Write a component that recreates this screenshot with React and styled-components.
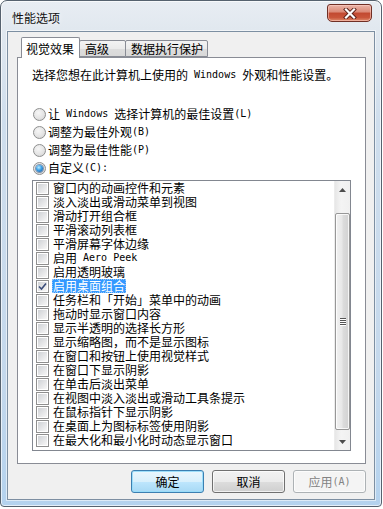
import React from "react";
import styled, { createGlobalStyle } from "styled-components";

const GlobalStyle = createGlobalStyle`
  html, body { margin: 0; padding: 0; background: #ffffff; }
  body {
    font-family: "Noto Sans CJK SC", "Noto Sans", sans-serif;
    font-size: 12px;
    color: #000;
  }
  * { box-sizing: border-box; }
`;

const Window = styled.div`
  width: 382px;
  height: 507px;
  border: 1px solid #56626f;
  border-radius: 7px 7px 4px 4px;
  background: linear-gradient(
    180deg,
    #e8edf3 0px,
    #e1e8ef 28px,
    #cfdeed 120px,
    #c4d8ec 380px,
    #b4d2ee 100%
  );
  box-shadow: inset 0 0 0 1px rgba(255, 255, 255, 0.65);
  padding: 0 6px 6px 6px;
  display: flex;
  flex-direction: column;
  overflow: hidden;
`;

const TitleBar = styled.div`
  height: 30px;
  display: flex;
  align-items: flex-start;
  padding-left: 5px;
`;

const Title = styled.div`
  margin-top: 9px;
  height: 16px;
  line-height: 16px;
  font-size: 12px;
  color: #111;
  text-shadow: 0 0 6px rgba(255, 255, 255, 0.9);
`;

const CloseButton = styled.div`
  margin-left: auto;
  margin-right: 3px;
  margin-top: 3px;
  width: 45px;
  height: 18px;
  border: 1px solid #6f2f25;
  border-radius: 3px 3px 5px 5px;
  background: linear-gradient(
    180deg,
    #eab4a8 0%,
    #dc8b78 42%,
    #c24a31 52%,
    #c9553a 78%,
    #de8c6c 100%
  );
  box-shadow: inset 0 0 0 1px rgba(255, 210, 200, 0.55);
  display: flex;
  align-items: center;
  justify-content: center;
`;

const Client = styled.div`
  flex: 1;
  border: 1px solid #7d8fa2;
  box-shadow: 0 0 0 1px rgba(255, 255, 255, 0.55);
  background: #f0f0f0;
  display: flex;
  flex-direction: column;
  padding: 5px 8px 6px 9px;
`;

const TabStrip = styled.div`
  height: 20px;
  display: flex;
  align-items: flex-end;
  padding-left: 4px;
  position: relative;
  z-index: 1;
`;

const Tab = styled.div`
  width: ${(p) => p.$w}px;
  height: ${(p) => (p.$active ? 21 : 17)}px;
  margin-bottom: ${(p) => (p.$active ? -1 : 0)}px;
  margin-left: ${(p) => (p.$first ? 0 : -1)}px;
  border: 1px solid #898c95;
  border-bottom: ${(p) => (p.$active ? "none" : "1px solid #898c95")};
  border-radius: 2px 2px 0 0;
  background: ${(p) =>
    p.$active
      ? "#ffffff"
      : "linear-gradient(180deg, #f3f3f3 0%, #ebebeb 50%, #dddddd 51%, #d9d9d9 100%)"};
  display: flex;
  align-items: flex-start;
  padding-top: ${(p) => (p.$active ? 4 : 1)}px;
  padding-left: ${(p) => p.$pl}px;
  font-size: 12px;
  z-index: ${(p) => (p.$active ? 2 : 1)};
`;

const Panel = styled.div`
  flex: 1;
  border: 1px solid #898c95;
  background: #ffffff;
  padding: 10px 14px 0 14px;
  display: flex;
  flex-direction: column;
`;

const Line = styled.div`
  height: 14px;
  white-space: nowrap;
  display: flex;
  align-items: flex-start;
`;

const Seg = styled.span`
  display: inline-block;
  height: 14px;
  line-height: 14px;
  vertical-align: top;
  white-space: pre;
`;

const Latin = styled(Seg)`
  font-family: "DejaVu Sans Mono", "Liberation Mono", monospace;
  font-size: 10px;
`;

const RadioGroup = styled.div`
  margin-top: 23px;
  display: flex;
  flex-direction: column;
`;

const RadioRow = styled.div`
  height: 18px;
  display: flex;
  align-items: center;
  padding-left: 1px;
  gap: 2px;
  white-space: nowrap;
`;

const RadioCircle = styled.span`
  width: 13px;
  height: 13px;
  border-radius: 50%;
  border: 1px solid #8e8f8f;
  background: radial-gradient(circle at 40% 35%, #f6f6f6 0%, #e4e4e4 55%, #cfcfcf 100%);
  display: flex;
  align-items: center;
  justify-content: center;
  flex-shrink: 0;
`;

const RadioDot = styled.span`
  width: 7px;
  height: 7px;
  border-radius: 50%;
  background: radial-gradient(circle at 40% 35%, #b9ecff 0%, #3a9ee6 45%, #1a4f8f 100%);
  box-shadow: 0 0 0 1px rgba(30, 70, 120, 0.5);
`;

const ListBox = styled.div`
  margin-top: 3px;
  width: 319px;
  height: 271px;
  border: 1px solid #828790;
  background: #ffffff;
  display: flex;
`;

const Items = styled.div`
  flex: 1;
  display: flex;
  flex-direction: column;
`;

const Item = styled.div`
  height: 14px;
  flex-shrink: 0;
  display: flex;
  align-items: center;
  padding-left: 3px;
  gap: 4px;
  white-space: nowrap;
`;

const Box = styled.span`
  width: 13px;
  height: 13px;
  border: 1px solid #8f8f8f;
  background: #ffffff;
  padding: 1px;
  flex-shrink: 0;
  display: flex;
`;

const BoxInner = styled.span`
  flex: 1;
  background: linear-gradient(135deg, #cfd2d6 0%, #e3e4e6 50%, #f7f7f7 100%);
  display: flex;
  align-items: center;
  justify-content: center;
`;

const ItemText = styled.span`
  height: 14px;
  display: flex;
  align-items: flex-start;
  padding: 0 1px;
  margin-left: -1px;
  color: ${(p) => (p.$sel ? "#ffffff" : "#000000")};
  background: ${(p) => (p.$sel ? "#3399ff" : "transparent")};
  outline: ${(p) => (p.$sel ? "1px dotted #8fc3f7" : "none")};
  outline-offset: -1px;
`;

const ScrollBar = styled.div`
  width: 16px;
  display: flex;
  flex-direction: column;
  background: linear-gradient(90deg, #e6e6e6 0%, #f4f4f4 40%, #f0f0f0 100%);
  border-left: 1px solid #ececec;
`;

const ArrowButton = styled.div`
  height: 17px;
  display: flex;
  align-items: center;
  justify-content: center;
  flex-shrink: 0;
`;

const Track = styled.div`
  flex: 1;
  display: flex;
  flex-direction: column;
  padding: ${(p) => p.$before}px 0 ${(p) => p.$after}px 0;
`;

const Thumb = styled.div`
  flex: 1;
  border: 1px solid #979797;
  border-radius: 2px;
  background: linear-gradient(90deg, #f1f1f1 0%, #e8e8e8 45%, #dcdcdc 55%, #d2d2d2 100%);
  box-shadow: inset 0 0 0 1px rgba(255, 255, 255, 0.8);
  display: flex;
  align-items: center;
  justify-content: center;
`;

const Grip = styled.div`
  width: 6px;
  display: flex;
  flex-direction: column;
  gap: 1px;
`;

const GripLine = styled.span`
  height: 1px;
  background: #555;
  box-shadow: 0 1px 0 #fff;
`;

const ButtonRow = styled.div`
  margin-top: 6px;
  height: 23px;
  display: flex;
  justify-content: flex-end;
  gap: 8px;
`;

const Button = styled.div`
  width: 73px;
  height: 23px;
  border-radius: 3px;
  border: 1px solid
    ${(p) => (p.$default ? "#3c7fb1" : p.$disabled ? "#adb2b5" : "#707070")};
  background: ${(p) =>
    p.$default
      ? "linear-gradient(180deg, #eaf6fd 0%, #d9f0fc 50%, #bee6fd 51%, #a7d9f5 100%)"
      : p.$disabled
      ? "#f4f4f4"
      : "linear-gradient(180deg, #f2f2f2 0%, #ebebeb 50%, #dddddd 51%, #cfcfcf 100%)"};
  box-shadow: inset 0 0 0 1px
    ${(p) => (p.$default ? "rgba(150, 220, 250, 0.9)" : "rgba(255, 255, 255, 0.7)")};
  color: ${(p) => (p.$disabled ? "#838383" : "#000")};
  display: flex;
  align-items: center;
  justify-content: center;
  white-space: nowrap;
`;

const renderText = (s) =>
  s
    .split(/([ -~]+)/)
    .filter(Boolean)
    .map((part, i) =>
      /^[ -~]+$/.test(part) ? <Latin key={i}>{part}</Latin> : <Seg key={i}>{part}</Seg>
    );

const effects = [
  "窗口内的动画控件和元素",
  "淡入淡出或滑动菜单到视图",
  "滑动打开组合框",
  "平滑滚动列表框",
  "平滑屏幕字体边缘",
  "启用 Aero Peek",
  "启用透明玻璃",
  "启用桌面组合",
  "任务栏和「开始」菜单中的动画",
  "拖动时显示窗口内容",
  "显示半透明的选择长方形",
  "显示缩略图，而不是显示图标",
  "在窗口和按钮上使用视觉样式",
  "在窗口下显示阴影",
  "在单击后淡出菜单",
  "在视图中淡入淡出或滑动工具条提示",
  "在鼠标指针下显示阴影",
  "在桌面上为图标标签使用阴影",
  "在最大化和最小化时动态显示窗口",
];

const radios = [
  { label: "让 Windows 选择计算机的最佳设置(L)", on: false },
  { label: "调整为最佳外观(B)", on: false },
  { label: "调整为最佳性能(P)", on: false },
  { label: "自定义(C):", on: true },
];

const CloseGlyph = () => (
  <svg width="14" height="11" viewBox="0 0 14 11">
    <path d="M3 1.5 L11 9.5 M11 1.5 L3 9.5" stroke="#5a2018" strokeWidth="4" strokeLinecap="square" />
    <path d="M3 1.5 L11 9.5 M11 1.5 L3 9.5" stroke="#ffffff" strokeWidth="2.2" strokeLinecap="square" />
  </svg>
);

const Check = () => (
  <svg width="9" height="9" viewBox="0 0 9 9">
    <path d="M1 4.5 L3.5 7 L8 1.5" fill="none" stroke="#3b4d7a" strokeWidth="1.6" />
  </svg>
);

const Arrow = ({ up }) => (
  <svg width="7" height="4" viewBox="0 0 7 4">
    <path d={up ? "M0 4 L3.5 0 L7 4 Z" : "M0 0 L3.5 4 L7 0 Z"} fill="#4d4d4d" />
  </svg>
);

export default function App() {
  return (
    <>
      <GlobalStyle />
      <Window>
        <TitleBar>
          <Title>性能选项</Title>
          <CloseButton>
            <CloseGlyph />
          </CloseButton>
        </TitleBar>
        <Client>
          <TabStrip>
            <Tab $active $first $w={59} $pl={4}>{renderText("视觉效果")}</Tab>
            <Tab $w={47} $pl={5}>{renderText("高级")}</Tab>
            <Tab $w={83} $pl={5}>{renderText("数据执行保护")}</Tab>
          </TabStrip>
          <Panel>
            <Line>{renderText("选择您想在此计算机上使用的 Windows 外观和性能设置。")}</Line>
            <RadioGroup>
              {radios.map((r) => (
                <RadioRow key={r.label}>
                  <RadioCircle>{r.on && <RadioDot />}</RadioCircle>
                  <Line>{renderText(r.label)}</Line>
                </RadioRow>
              ))}
            </RadioGroup>
            <ListBox>
              <Items>
                {effects.map((e) => {
                  const sel = e === "启用桌面组合";
                  return (
                    <Item key={e}>
                      <Box>
                        <BoxInner>{sel && <Check />}</BoxInner>
                      </Box>
                      <ItemText $sel={sel}>{renderText(e)}</ItemText>
                    </Item>
                  );
                })}
              </Items>
              <ScrollBar>
                <ArrowButton>
                  <Arrow up />
                </ArrowButton>
                <Track $before={15} $after={3}>
                  <Thumb>
                    <Grip>
                      <GripLine />
                      <GripLine />
                      <GripLine />
                      <GripLine />
                    </Grip>
                  </Thumb>
                </Track>
                <ArrowButton>
                  <Arrow />
                </ArrowButton>
              </ScrollBar>
            </ListBox>
          </Panel>
          <ButtonRow>
            <Button $default>{renderText("确定")}</Button>
            <Button>{renderText("取消")}</Button>
            <Button $disabled>{renderText("应用(A)")}</Button>
          </ButtonRow>
        </Client>
      </Window>
    </>
  );
}
